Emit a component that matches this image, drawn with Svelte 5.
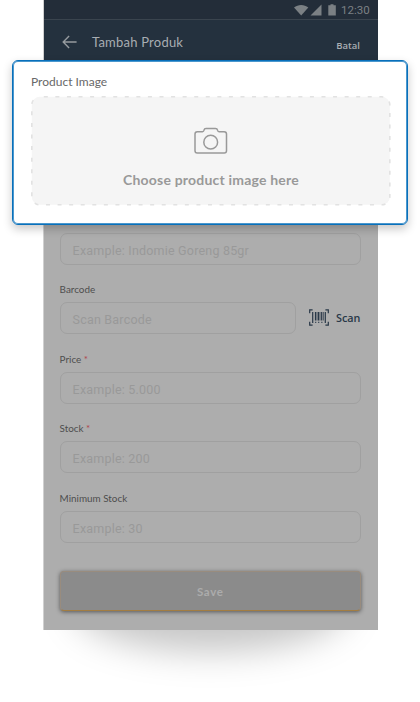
<script>
  const fields = [
    { label: 'Product Name', placeholder: 'Example: Indomie Goreng 85gr', required: true },
    { label: 'Barcode', placeholder: 'Scan Barcode', scan: true },
    { label: 'Price', placeholder: 'Example: 5.000', required: true },
    { label: 'Stock', placeholder: 'Example: 200', required: true },
    { label: 'Minimum Stock', placeholder: 'Example: 30' }
  ];
</script>

<main>
  <div class="glow"></div>
  <section class="phone">
    <div class="status">
      <svg width="44" height="14" viewBox="0 0 44 14" fill="#7b8084">
        <path d="M0 4.6C4 1 10.300 1 14.300 4.600L7.200 12.600Z" />
        <path d="M16.500 12.500H27.500V1.500Z" />
        <path d="M36.500 1.200h3v1.100h2.300v10.300h-7.500v-10.300h2.200z" />
      </svg>
      <span>12:30</span>
    </div>
    <header>
      <svg width="16" height="14" viewBox="0 0 16 14" fill="none" stroke="#969b9f" stroke-width="1.400">
        <path d="M14.600 7H1.200M7.100 1L1.200 7l5.900 6" />
      </svg>
      <h1>Tambah Produk</h1>
      <b>Batal</b>
    </header>
    <form>
      {#each fields as field}
        <div class="field">
          <div class="label">{field.label}{#if field.required}<i>*</i>{/if}</div>
          <div class="row">
            <div class="input">{field.placeholder}</div>
            {#if field.scan}
              <div class="scan">
                <svg width="20" height="17" viewBox="0 0 20 17" fill="none" stroke="#293848">
                  <path d="M.7 4.200V.8H3.600M16.400 .8h2.900v3.400M19.300 12.800v3.400H16.400M3.600 16.200H.7v-3.400" stroke-width="1.200" />
                  <path d="M3.700 3v11M6.500 3v8.500M9.500 3v8.500M12.700 3v8.500M16.300 3v11" stroke-width="1.200" />
                  <path d="M8 3v8.500M11 3v8.500M14.400 3v8.500" stroke-width=".7" />
                  <path d="M6 13.300h1.300M9 13.300h1.300M12.200 13.300h1.300" />
                </svg>
                <b>Scan</b>
              </div>
            {/if}
          </div>
        </div>
      {/each}
      <div class="save">Save</div>
    </form>
  </section>

  <section class="card">
    <h2>Product Image</h2>
    <div class="drop">
      <svg class="dash" width="360" height="110" fill="#f5f5f5" stroke="#e2e2e2" stroke-width="1.600">
        <rect x=".8" y=".8" width="358" height="108" rx="8" stroke-dasharray="4 7.570" stroke-dashoffset="-4" />
      </svg>
      <svg class="camera" width="34" height="28" viewBox="0 0 34 28" fill="none" stroke="#999" stroke-width="1.500">
        <path d="M3.300 4.700H8.500Q9.700 4.700 10 3.200Q10.300 1.500 12 1.500H21.500Q23.200 1.500 23.500 3.200Q23.800 4.700 25 4.700H30.200Q32.500 4.700 32.500 7V23.700Q32.500 26 30.200 26H3.300Q1 26 1 23.700V7Q1 4.700 3.300 4.700Z" />
        <circle cx="16.700" cy="15.200" r="6.900" />
      </svg>
      <strong>Choose product image here</strong>
    </div>
  </section>
</main>

<style>
  :global(body) { margin: 0; background: #fff; }
  main {
    position: relative;
    width: 420px;
    height: 702px;
    overflow: hidden;
    background: #fff;
    font-family: Lato, "Open Sans", sans-serif;
  }
  .glow {
    position: absolute;
    left: 74px;
    top: 560px;
    width: 274px;
    height: 92px;
    border-radius: 50%;
    background: rgba(0, 0, 0, .22);
    filter: blur(17px);
  }
  .phone {
    position: relative;
    box-sizing: border-box;
    width: 335px;
    height: 630px;
    margin-left: 43px;
    border-left: 1px solid #d0d0d0;
    background: #adadad;
    display: flex;
    flex-direction: column;
  }
  .status {
    box-sizing: border-box;
    height: 20px;
    flex: none;
    padding: 0 8px 0 0;
    border-bottom: 1px solid #3a444e;
    background: #232d39;
    display: flex;
    align-items: center;
    justify-content: flex-end;
    gap: 3px;
  }
  .status svg { margin-top: 1px; }
  .status span {
    width: 29px;
    font: 11.500px/14px Roboto, sans-serif;
    color: #7b8084;
    white-space: nowrap;
  }
  header {
    height: 45px;
    flex: none;
    box-sizing: border-box;
    padding: 0 18px 1px 18px;
    background: #24313e;
    display: flex;
    align-items: center;
    color: #a8adb2;
  }
  header svg { margin-right: 14px; }
  h1 { margin: 0; font-size: 13px; line-height: 16px; font-weight: 400; letter-spacing: .22px; flex: 1; }
  header b { font: 600 9.500px "Open Sans", sans-serif; margin-top: 6px; }
  form { padding: 148.800px 17px 0 15.600px; display: flex; flex-direction: column; }
  .field { height: 69.500px; }
  .label {
    height: 19px;
    font-size: 9.900px;
    line-height: 12px;
    color: #4e4e4e;
    white-space: nowrap;
  }
  .label i { font-style: normal; color: #b0474d; margin-left: 2.500px; }
  .row { display: flex; gap: 13px; }
  .input {
    box-sizing: border-box;
    flex: 1;
    height: 32px;
    padding: 1px 0 0 12px;
    border: 1px solid #a0a0a0;
    border-radius: 7px;
    font: 400 12.500px/31px Roboto, sans-serif;
    letter-spacing: .2px;
    color: #999;
    white-space: nowrap;
  }
  .scan { width: 52px; height: 31px; display: flex; align-items: center; gap: 7px; color: #293848; }
  .scan svg { flex: none; }
  .scan b { font: 600 10.800px "Open Sans", sans-serif; }
  .save {
    box-sizing: border-box;
    height: 40px;
    margin-top: 10.200px;
    border: 1px solid #998c7e;
    border-bottom-color: #a37d42;
    border-radius: 4px;
    background: #8b8b8b;
    box-shadow: 0 1px 4px rgba(0, 0, 0, .5);
    font-size: 11.500px;
    line-height: 40px;
    font-weight: 700;
    letter-spacing: .7px;
    text-align: center;
    color: #acacac;
  }
  .card {
    position: absolute;
    left: 12px;
    top: 60px;
    box-sizing: border-box;
    width: 396px;
    height: 165px;
    padding: 14px 17px 0 18px;
    border: 1px solid #0870bb;
    border-radius: 6px;
    background: #fff;
    box-shadow: inset 0 0 0 1px #4b97cd, 0 4px 10px rgba(0, 0, 0, .22);
  }
  h2 { margin: 0; height: 21px; font-size: 12px; line-height: 14px; font-weight: 400; color: #686868; }
  .drop {
    position: relative;
    width: 360px;
    height: 110px;
    display: flex;
    flex-direction: column;
    align-items: center;
  }
  .dash { position: absolute; inset: 0; }
  .camera { position: relative; margin-top: 31px; }
  strong { position: relative; margin-top: 17px; font-size: 14px; line-height: 16px; letter-spacing: .2px; color: #999; white-space: nowrap; }
</style>
